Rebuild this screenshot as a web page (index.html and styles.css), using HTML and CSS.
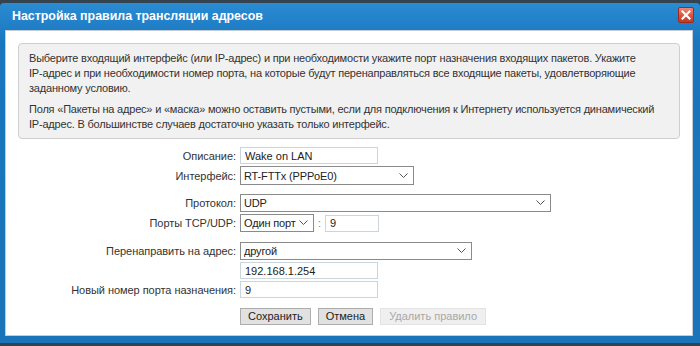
FILE: index.html
```html
<!DOCTYPE html>
<html lang="ru">
<head>
	<meta charset="UTF-8">
	<title>Настройка правила трансляции адресов</title>
	<link rel="stylesheet" href="styles.css">
</head>
<body>
	<div class="window">
		<div class="titlebar">
			<div class="title">Настройка правила трансляции адресов</div>
			<div class="close">
				<svg width="10" height="10" viewBox="0 0 10 10"><path d="M1.5 1.5 L8.5 8.5 M8.5 1.5 L1.5 8.5" stroke="#fff" stroke-width="2.2" stroke-linecap="square"/></svg>
			</div>
		</div>
		<div class="content">
			<div class="info">
				<p>Выберите входящий интерфейс (или <span class="nw">IP-адрес</span>) и при необходимости укажите порт назначения входящих пакетов. Укажите <span class="nw">IP-адрес</span> и при необходимости номер порта, на которые будут перенаправляться все входящие пакеты, удовлетворяющие заданному условию.</p>
				<p>Поля «Пакеты на адрес» и «маска» можно оставить пустыми, если для подключения к Интернету используется динамический <span class="nw">IP-адрес</span>. В большинстве случаев достаточно указать только интерфейс.</p>
			</div>

			<div class="form">
				<label class="lbl">Описание:</label>
				<div class="field"><input class="inp w138" type="text" value="Wake on LAN"></div>

				<label class="lbl">Интерфейс:</label>
				<div class="field">
					<span class="sel w174 tall">
						<select><option>RT-FTTx (PPPoE0)</option></select>
						<svg class="chev" width="9" height="6" viewBox="0 0 9 6"><path d="M0.5 0.5 L4.5 4.5 L8.5 0.5" fill="none" stroke="#555" stroke-width="1"/></svg>
					</span>
				</div>

				<div class="spacer s5"></div>

				<label class="lbl">Протокол:</label>
				<div class="field">
					<span class="sel w311">
						<select><option>UDP</option></select>
						<svg class="chev" width="9" height="6" viewBox="0 0 9 6"><path d="M0.5 0.5 L4.5 4.5 L8.5 0.5" fill="none" stroke="#555" stroke-width="1"/></svg>
					</span>
				</div>

				<label class="lbl">Порты TCP/UDP:</label>
				<div class="field">
					<span class="sel w74">
						<select><option>Один порт</option></select>
						<svg class="chev" width="9" height="6" viewBox="0 0 9 6"><path d="M0.5 0.5 L4.5 4.5 L8.5 0.5" fill="none" stroke="#555" stroke-width="1"/></svg>
					</span>
					<span class="colon">:</span>
					<input class="inp w54" type="text" value="9">
				</div>

				<div class="spacer s6"></div>

				<label class="lbl">Перенаправить на адрес:</label>
				<div class="field">
					<span class="sel w232">
						<select><option>другой</option></select>
						<svg class="chev" width="9" height="6" viewBox="0 0 9 6"><path d="M0.5 0.5 L4.5 4.5 L8.5 0.5" fill="none" stroke="#555" stroke-width="1"/></svg>
					</span>
				</div>

				<div></div>
				<div class="field"><input class="inp w138" type="text" value="192.168.1.254"></div>

				<label class="lbl">Новый номер порта назначения:</label>
				<div class="field"><input class="inp w138" type="text" value="9"></div>

				<div></div>
				<div class="buttons">
					<button class="btn">Сохранить</button>
					<button class="btn">Отмена</button>
					<button class="btn" disabled>Удалить правило</button>
				</div>
			</div>
		</div>
	</div>
</body>
</html>
```

FILE: styles.css
```css
body{
	margin:0;
	background-color:#33434f;
	font-family:"Liberation Sans", Arial, sans-serif;
	height:346px;
	overflow:hidden;
}
.window{
	margin-top:3px;
	height:340px;
	box-sizing:border-box;
	background:linear-gradient(#2a8bd3, #1876be 40px, #1a74b9);
	border-radius:4px 4px 0 0;
	padding-bottom:7px;
	display:flex;
	flex-direction:column;
}
.titlebar{
	height:27px;
	display:flex;
	justify-content:space-between;
	align-items:flex-start;
	padding:4px 6px 0 12px;
	box-sizing:border-box;
}
.title{
	color:#fff;
	font-weight:bold;
	font-size:12.4px;
	line-height:16px;
	margin-top:1px;
}
.close{
	width:16px;
	height:16px;
	box-sizing:border-box;
	border:1px solid #9e2a1e;
	border-radius:2px;
	background:linear-gradient(#f08672, #d9523e 55%, #c53a28);
	display:flex;
	align-items:center;
	justify-content:center;
}
.content{
	flex:1;
	margin:0 7px 0 5px;
	background-color:#fff;
	border:1px solid #c5ccd3;
	box-sizing:border-box;
	padding:12px 12px 0 12px;
}
.info{
	background-color:#f1f1f1;
	border:1px solid #cfcfcf;
	border-radius:4px;
	padding:7px 10px 6px 10px;
	color:#333;
	font-size:11px;
	letter-spacing:-0.2px;
	line-height:15px;
}
.info p{
	margin:0;
}
.info p+p{
	margin-top:6px;
}
.nw{
	white-space:nowrap;
}
.form{
	margin-top:8px;
	display:grid;
	grid-template-columns:218px 1fr;
	column-gap:4px;
	row-gap:2px;
	align-items:center;
	font-size:11px;
	color:#333;
}
.lbl{
	text-align:right;
	letter-spacing:-0.05px;
}
.spacer{
	grid-column:1 / 3;
}
.s5{ height:5px; }
.s6{ height:6px; }
.field{
	display:flex;
	align-items:center;
}
.inp{
	height:17px;
	box-sizing:border-box;
	border:1px solid #cbd5de;
	padding:0 4px;
	margin:0;
	font-family:inherit;
	font-size:11px;
	color:#222;
	background-color:#fff;
	outline:none;
}
.sel{
	position:relative;
	display:block;
}
.sel select{
	appearance:none;
	-webkit-appearance:none;
	width:100%;
	height:18px;
	box-sizing:border-box;
	border:1px solid #8a8a8a;
	border-radius:0;
	background-color:#fff;
	padding:0 16px 0 3px;
	margin:0;
	font-family:inherit;
	font-size:11px;
	letter-spacing:-0.15px;
	color:#222;
	display:block;
	outline:none;
}
.sel.tall select{
	height:19px;
}
.chev{
	position:absolute;
	right:6px;
	top:6px;
}
.tall .chev{
	top:7px;
}
.w138{ width:138px; }
.w54{ width:54px; }
.w174{ width:174px; }
.w311{ width:311px; }
.w74{ width:74px; }
.w232{ width:232px; }
.colon{
	color:#888;
	margin:0 4px;
}
.buttons{
	margin-top:8px;
	display:flex;
	gap:7px;
}
.btn{
	height:17px;
	box-sizing:border-box;
	padding:0 7px;
	border:1px solid #adadad;
	background-color:#e1e1e1;
	font-family:inherit;
	font-size:11px;
	color:#222;
	line-height:15px;
}
.btn:disabled{
	background-color:#efefef;
	border-color:#e3e3e3;
	color:#a8a8a8;
	padding:0 8px;
}
```
